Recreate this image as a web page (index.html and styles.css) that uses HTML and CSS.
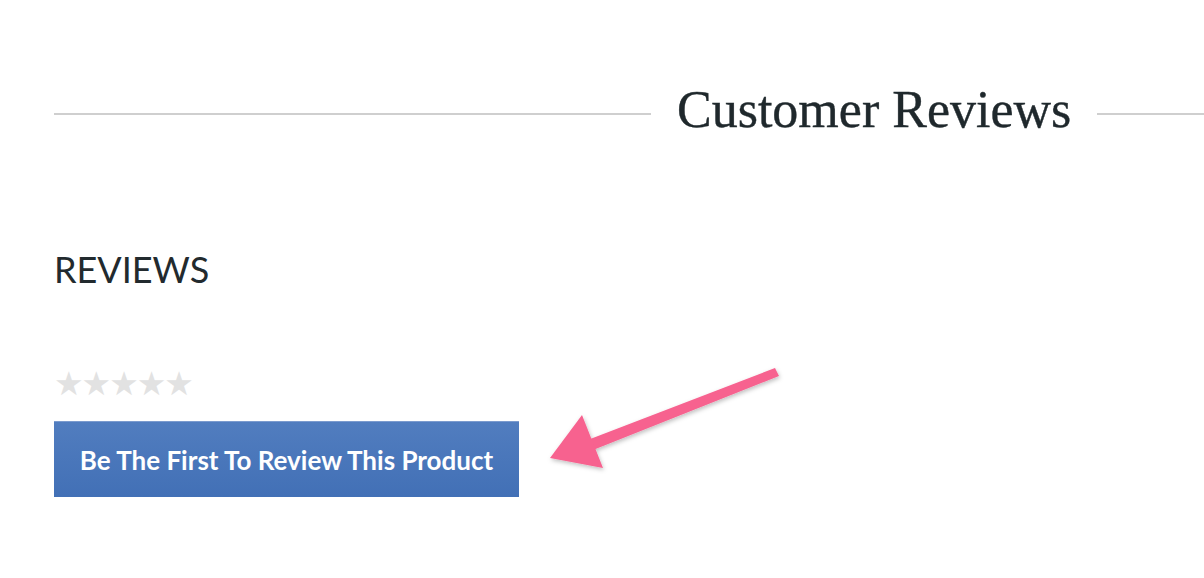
FILE: index.html
```html
<!DOCTYPE html>
<html>
<head>
<meta charset="utf-8">
<link rel="stylesheet" href="styles.css">
</head>
<body>
<div class="page">
  <div class="heading-row">
    <span class="rule rule-left"></span>
    <h2 class="title">Customer Reviews</h2>
    <span class="rule rule-right"></span>
  </div>
  <div class="reviews">
    <h3 class="reviews-label">REVIEWS</h3>
    <div class="stars">★★★★★</div>
    <button class="review-btn">Be The First To Review This Product</button>
  </div>
  <svg class="arrow" width="300" height="160" viewBox="0 0 300 160">
    <defs>
      <filter id="sh" x="-20%" y="-20%" width="140%" height="140%">
        <feDropShadow dx="1" dy="2" stdDeviation="2" flood-color="#000" flood-opacity="0.25"/>
      </filter>
    </defs>
    <g filter="url(#sh)" fill="#f7628f">
      <polygon points="275,18 279,26 78,106 72,96"/>
      <polygon points="82,65 103,118 50,108"/>
    </g>
  </svg>
</div>
</body>
</html>
```
FILE: styles.css
```css
html, body {
  margin: 0;
  padding: 0;
  background: #ffffff;
}
.page {
  position: relative;
  width: 1204px;
  height: 578px;
  overflow: hidden;
}
.heading-row {
  display: flex;
  align-items: center;
  padding-top: 80px;
  padding-left: 54px;
  gap: 26px;
}
.rule {
  height: 2px;
  background: #cfcfcf;
  margin-top: 7px;
}
.rule-left {
  width: 597px;
}
.rule-right {
  flex: 1;
}
.title {
  margin: 0;
  font-family: "Liberation Serif", "Times New Roman", serif;
  font-weight: normal;
  font-size: 52px;
  line-height: 60px;
  color: #1f282c;
  -webkit-text-stroke: 0.4px #1f282c;
  white-space: nowrap;
}
.reviews {
  padding-left: 54px;
  padding-top: 109px;
}
.reviews-label {
  margin: 0;
  font-family: Lato, "Open Sans", sans-serif;
  font-weight: normal;
  font-size: 36px;
  line-height: 40px;
  color: #222a2e;
}
.stars {
  margin-top: 78px;
  font-family: "DejaVu Sans", sans-serif;
  font-size: 33px;
  line-height: 34px;
  letter-spacing: -2px;
  color: #e2e2e2;
}
.review-btn {
  display: block;
  margin-top: 20px;
  width: 465px;
  height: 76px;
  border: none;
  border-top: 1px solid #7b9bce;
  background: linear-gradient(#517dbf, #4270b6);
  color: #ffffff;
  font-family: Lato, "Open Sans", sans-serif;
  font-weight: bold;
  font-size: 26px;
  padding: 0;
}
.arrow {
  position: absolute;
  left: 500px;
  top: 350px;
}
```
